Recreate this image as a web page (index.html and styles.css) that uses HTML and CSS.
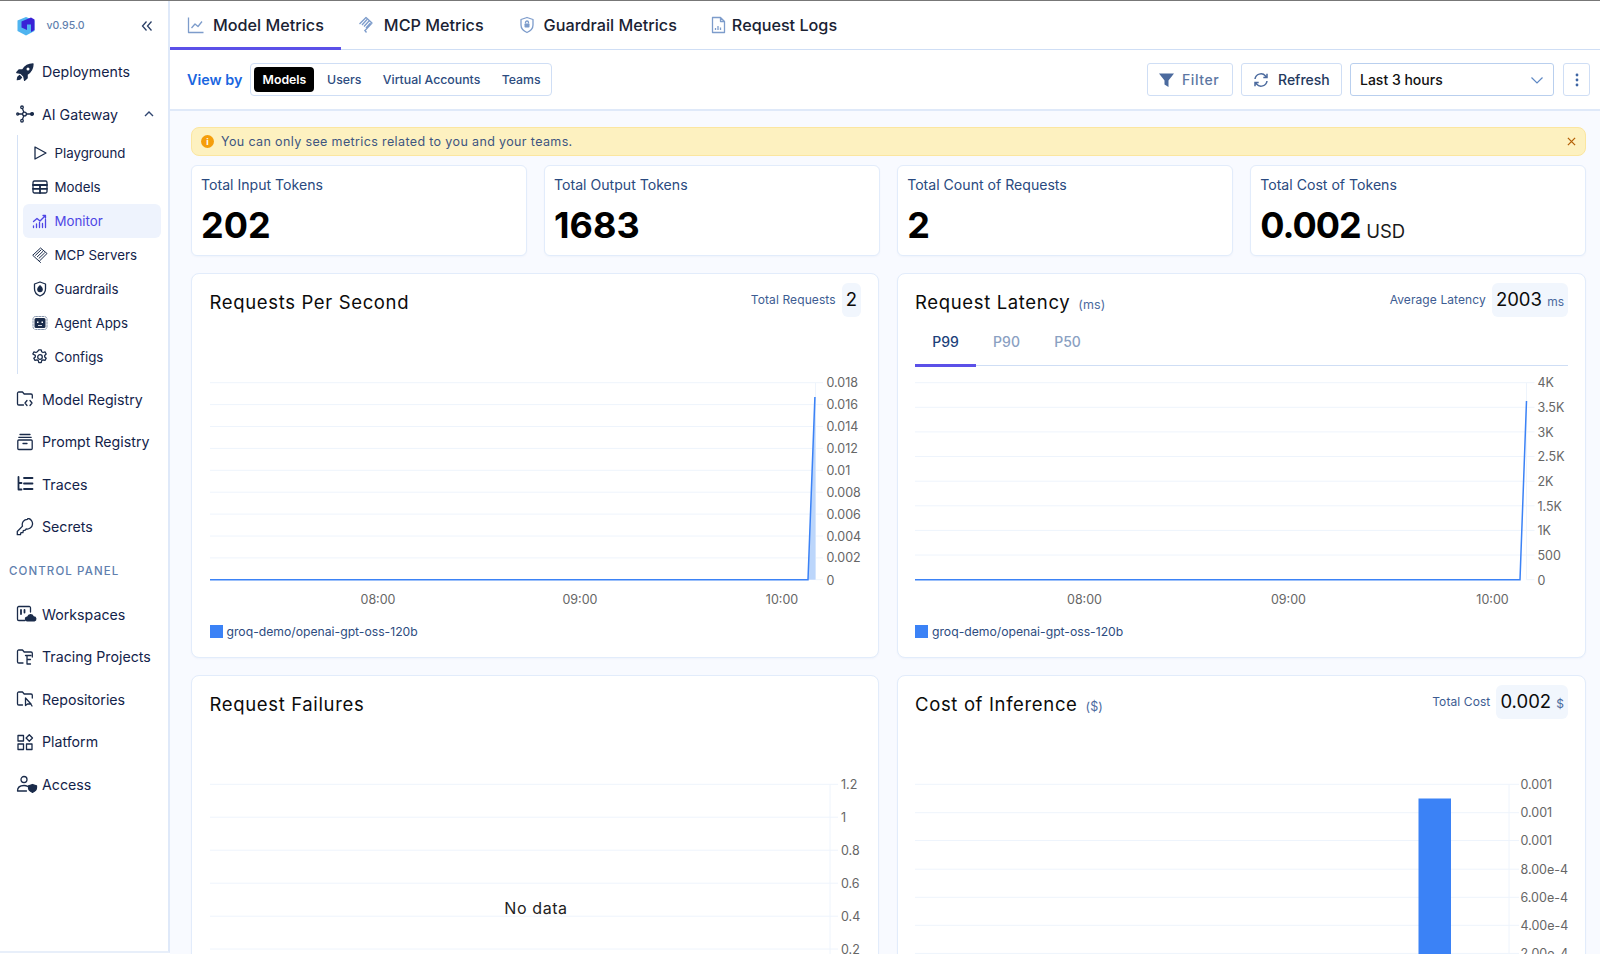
FILE: index.html
```html
<!DOCTYPE html>
<html lang="en">
<head>
<meta charset="utf-8">
<title>AI Gateway Monitor</title>
<link rel="stylesheet" href="styles.css">
</head>
<body>
<div class="app">
<aside class="sidebar">
  <div class="brand">
    <svg class="logo" viewBox="0 0 20 20"><path class="logo-l" d="M10 1 1.500 4.500v10.500l8.500 4.500 8.500-4.500V4.500z"/><path class="logo-d" d="M5.500 5.500 15 1.500l3.500 2v10.500l-3.500 2V8.500H11v5.500l-5.500-2.500z"/></svg>
    <span class="version">v0.95.0</span>
    <svg class="collapse" viewBox="0 0 12 12"><path d="M5.500 1.500 1.500 6l4 4.500M10.500 1.500 6.500 6l4 4.500"/></svg>
  </div>
  <nav class="nav">
    <a class="item"><svg class="ico" viewBox="0 0 18 18"><path class="fill" d="M17 1c-4.500 0-8 2-10.500 6H3L.8 9.500l4 .8 3 3 .8 4 2.500-2.300V11.500C15 9 17 5.500 17 1z"/><circle class="hole" cx="12" cy="6" r="1.500"/><path class="fill" d="M3.500 12.500C2 13.300 1.300 15 1.300 16.700c1.700 0 3.400-.7 4.200-2.200z"/></svg>Deployments</a>
    <a class="item"><svg class="ico" viewBox="0 0 18 18"><circle cx="8.500" cy="9" r="1.900"/><circle cx="6" cy="2.300" r="1.300"/><circle cx="6" cy="15.700" r="1.300"/><circle cx="1.700" cy="9" r="1"/><circle class="fill" cx="16" cy="9" r="1.400"/><path d="M6.500 3.600 7.800 7.200M6.500 14.400 7.800 10.800M2.700 9h3.900M10.400 9h4.200"/></svg>AI Gateway<svg class="chev" viewBox="0 0 12 12"><path d="M2 8l4-4 4 4"/></svg></a>
    <div class="sub">
      <a class="subitem"><svg class="ico" viewBox="0 0 16 16"><path d="M3 2v12L14 8z"/></svg>Playground</a>
      <a class="subitem"><svg class="ico" viewBox="0 0 16 16"><rect x="1" y="2" width="14" height="12" rx="1.500"/><path class="thick" d="M1 6h14M1 9.800h14M8 6v8"/></svg>Models</a>
      <a class="subitem active"><svg class="ico" viewBox="0 0 16 16"><path d="M1.500 14.500v-1.500M4.500 14.500v-3.500M7.500 14.500v-5M10.500 14.500v-4M13.500 14.500v-8M1.500 8.500l3.500-3 3 2.500 5.500-5.500M11 2.500h2.500V5"/></svg>Monitor</a>
      <a class="subitem"><svg class="ico thin" viewBox="0 0 16 16"><path d="M1 8 8.500 1l6.500 5.500-7.500 7.500zM3.500 8.300 9 3M5.300 9.800 10.800 4.500M7 11.300l5.500-5.300M6.500 13.500l2 2"/></svg>MCP Servers</a>
      <a class="subitem"><svg class="ico" viewBox="0 0 16 16"><path d="M8 1 13.500 3v5c0 3.200-2.300 5.700-5.500 7C4.800 13.700 2.500 11.200 2.500 8V3z"/><path class="fill" d="M8 4.800c1 1.200 2.200 2.200 2.200 3.500a2.200 2.200 0 0 1-4.400 0C5.800 7 7 6 8 4.800z"/></svg>Guardrails</a>
      <a class="subitem"><svg class="ico" viewBox="0 0 16 16"><rect class="dash" x="1" y="1.500" width="14" height="13" rx="2.500"/><rect class="fill nostroke" x="2.500" y="3" width="11" height="10" rx="1.500"/><rect class="hole" x="5" y="6.500" width="1.500" height="1.500"/><rect class="hole" x="9.500" y="6.500" width="1.500" height="1.500"/><rect class="hole" x="6" y="10" width="4" height=".8"/></svg>Agent Apps</a>
      <a class="subitem"><svg class="ico" viewBox="0 0 16 16"><circle cx="8" cy="8" r="2.300"/><path d="M6.800.8h2.400l.5 2 1.300.7 2-.6 1.200 2.100-1.500 1.400v1.500l1.500 1.400-1.200 2.100-2-.6-1.300.8-.5 2H6.800l-.5-2-1.300-.8-2 .6-1.200-2.100 1.500-1.400V6.400L.8 5l1.200-2.100 2 .6 1.300-.7z"/></svg>Configs</a>
    </div>
    <a class="item"><svg class="ico" viewBox="0 0 18 18"><path d="M7.500 15H2.800a1.300 1.300 0 0 1-1.300-1.300V3.300A1.300 1.300 0 0 1 2.800 2h3.700l1.700 2H15a1.300 1.300 0 0 1 1.300 1.300V8"/><path d="M11 10.500 9 13l2 2.500M14 10.500l2 2.500-2 2.500"/></svg>Model Registry</a>
    <a class="item"><svg class="ico" viewBox="0 0 18 18"><path d="M4 1.500h10M2.800 4.300h12.400"/><rect x="1.800" y="7" width="14.400" height="9.500" rx="1"/><path d="M7 10.500h4"/></svg>Prompt Registry</a>
    <a class="item"><svg class="ico" viewBox="0 0 18 18"><path class="thick" d="M2.500 2v12.500h3M2.500 8h3M8 3h8.500M8 8.500h8.500M8 14h8.500"/></svg>Traces</a>
    <a class="item"><svg class="ico" viewBox="0 0 18 18"><path d="M11.500 1.300a5.200 5.200 0 0 0-5 6.800L1.300 13.500V16.700h3.200l.4-2h2l.4-2 2-.5.900-1.200a5.200 5.200 0 1 0 1.800-10.700z"/></svg>Secrets</a>
    <div class="section">CONTROL PANEL</div>
    <a class="item"><svg class="ico cloud" viewBox="0 0 21 18"><path d="M9 15.500H2.800a1.300 1.300 0 0 1-1.300-1.300V2.800a1.300 1.300 0 0 1 1.300-1.300h10.400a1.300 1.300 0 0 1 1.300 1.300V7"/><path class="thick" d="M5 5v4M8.500 5v2.500"/><path class="fill nostroke" d="M11.500 16.500a2.500 2.500 0 0 1-.3-5 3.500 3.500 0 0 1 6.600-.3 2.700 2.700 0 0 1 .7 5.300z"/></svg>Workspaces</a>
    <a class="item"><svg class="ico" viewBox="0 0 18 18"><path d="M7 15H2.800a1.300 1.300 0 0 1-1.300-1.300V3.300A1.300 1.300 0 0 1 2.800 2h3.700l1.700 2H15a1.300 1.300 0 0 1 1.300 1.300V9"/><path d="M11 7.500v8.500h3.500M11 11.500h3.500M9.500 7.500h5.500"/></svg>Tracing Projects</a>
    <a class="item"><svg class="ico" viewBox="0 0 18 18"><path d="M6.500 15H2.800a1.300 1.300 0 0 1-1.300-1.300V3.300A1.300 1.300 0 0 1 2.800 2h3.700l1.700 2H15a1.300 1.300 0 0 1 1.300 1.300V8"/><path d="M9.500 8v7.500l2-1.500h3.500zM14.500 13.500l1.500 2.500"/></svg>Repositories</a>
    <a class="item"><svg class="ico" viewBox="0 0 18 18"><rect x="2" y="2.500" width="5.500" height="5.500"/><rect x="2" y="11" width="5.500" height="5.500"/><rect x="10.500" y="11" width="5.500" height="5.500"/><path d="M13.300 1.800 16.500 5l-3.200 3.200L10.100 5z"/></svg>Platform</a>
    <a class="item"><svg class="ico wide" viewBox="0 0 22 18"><circle cx="8" cy="4.500" r="3"/><path d="M1.500 16h9M1.500 16c0-3.500 2.500-5.500 6.500-5.500 1.500 0 2.700.3 3.700.8"/><path class="fill" d="M16.500 9.500l4 1.300v2c0 2-1.500 3.500-4 4.500-2.500-1-4-2.500-4-4.500v-2z"/></svg>Access</a>
  </nav>
</aside>

<main class="main">
  <header class="tabs">
    <a class="tab on"><svg class="tab-ico" viewBox="0 0 18 18"><path d="M1.500 1.500v15h15M4.500 12l3.500-4 3 2.500 4-5"/></svg>Model Metrics</a>
    <a class="tab"><svg class="tab-ico" viewBox="0 0 18 18"><path d="M1.500 8 8 1.500l6 5.500-6.500 7M4 9l5-5.500M6 10.500l5-5.500M8 12l4.500-5M6.500 14l2 2.500"/></svg>MCP Metrics</a>
    <a class="tab"><svg class="tab-ico" viewBox="0 0 18 18"><path d="M9 1.500 15 3.500v5.500c0 3.500-2.500 6-6 7.500-3.500-1.500-6-4-6-7.500V3.500z"/><rect class="tab-fill" x="6.500" y="7.500" width="5" height="4" rx=".8"/><path d="M7.500 7.500V6.500a1.500 1.500 0 0 1 3 0v1"/></svg>Guardrail Metrics</a>
    <a class="tab"><svg class="tab-ico doc" viewBox="0 0 15 18"><path d="M1.500 1.500h8l4 4v11h-12zM9.500 1.500v4h4M4.500 14v-2M7 14v-4M9.500 14v-2.500"/></svg>Request Logs</a>
  </header>

  <div class="toolbar">
    <span class="viewby">View by</span>
    <div class="segment">
      <span class="seg sel">Models</span>
      <span class="seg">Users</span>
      <span class="seg">Virtual Accounts</span>
      <span class="seg">Teams</span>
    </div>
    <div class="spacer"></div>
    <button class="btn filter"><svg class="btn-ico" viewBox="0 0 16 16"><path class="solid-f" d="M.5 1.500h15L10 8.500v6.500l-4-2.500V8.500z"/></svg>Filter</button>
    <button class="btn refresh"><svg class="btn-ico" viewBox="0 0 16 16"><path class="stroke-r" d="M2 7a6 6 0 0 1 10.500-3L14 5.500M14 9a6 6 0 0 1-10.500 3L2 10.500M14 1.800v3.700h-3.700M2 14.200v-3.700h3.700"/></svg>Refresh</button>
    <div class="select">Last 3 hours<svg class="sel-chev" viewBox="0 0 14 14"><path d="M1.500 4.500 7 10l5.500-5.500"/></svg></div>
    <button class="btn more"><svg class="more-ico" viewBox="0 0 4 14"><circle cx="2" cy="2" r="1.400"/><circle cx="2" cy="7" r="1.400"/><circle cx="2" cy="12" r="1.400"/></svg></button>
  </div>

  <div class="content">
    <div class="banner">
      <span class="info">i</span>
      <span class="banner-text">You can only see metrics related to you and your teams.</span>
      <svg class="close" viewBox="0 0 10 10"><path d="M1 1l8 8M9 1l-8 8"/></svg>
    </div>

    <div class="stats">
      <div class="stat"><div class="stat-label">Total Input Tokens</div><div class="stat-value">202</div></div>
      <div class="stat"><div class="stat-label">Total Output Tokens</div><div class="stat-value">1683</div></div>
      <div class="stat"><div class="stat-label">Total Count of Requests</div><div class="stat-value">2</div></div>
      <div class="stat"><div class="stat-label">Total Cost of Tokens</div><div class="stat-value"><span class="tight">0.002</span> <span class="unit">USD</span></div></div>
    </div>

    <div class="charts">
      <section class="card">
        <div class="head">
          <h2 class="title">Requests Per Second</h2>
          <div class="metric"><span class="metric-label">Total Requests</span><span class="metric-box">2</span></div>
        </div>
        <svg class="chart" viewBox="0 370 652 242">
          <g class="grid">
            <line x1="0" x2="613" y1="382.700" y2="382.700"/><line x1="0" x2="613" y1="404.600" y2="404.600"/><line x1="0" x2="613" y1="426.500" y2="426.500"/><line x1="0" x2="613" y1="448.400" y2="448.400"/><line x1="0" x2="613" y1="470.300" y2="470.300"/><line x1="0" x2="613" y1="492.200" y2="492.200"/><line x1="0" x2="613" y1="514.100" y2="514.100"/><line x1="0" x2="613" y1="536" y2="536"/><line x1="0" x2="613" y1="557.900" y2="557.900"/>
            <line x1="605.500" x2="605.500" y1="382.700" y2="579.700"/><line x1="605.500" x2="613" y1="579.700" y2="579.700"/>
          </g>
          <path class="area" d="M598 579.700 604.900 397 605.500 397V579.700z"/>
          <path class="line" d="M0 579.700H598L604.900 397"/>
          <g class="ylab">
            <text x="616.500" y="387.200">0.018</text><text x="616.500" y="409.100">0.016</text><text x="616.500" y="431">0.014</text><text x="616.500" y="452.900">0.012</text><text x="616.500" y="474.800">0.01</text><text x="616.500" y="496.700">0.008</text><text x="616.500" y="518.600">0.006</text><text x="616.500" y="540.500">0.004</text><text x="616.500" y="562.400">0.002</text><text x="616.500" y="584.700">0</text>
          </g>
          <g class="xlab"><text x="168" y="603.500">08:00</text><text x="370" y="603.500">09:00</text><text x="572" y="603.500">10:00</text></g>
        </svg>
        <div class="legend"><i class="swatch"></i>groq-demo/openai-gpt-oss-120b</div>
      </section>

      <section class="card">
        <div class="head">
          <h2 class="title">Request Latency <small class="title-unit">(ms)</small></h2>
          <div class="metric"><span class="metric-label">Average Latency</span><span class="metric-box">2003 <small class="metric-unit">ms</small></span></div>
        </div>
        <div class="ptabs"><span class="ptab on">P99</span><span class="ptab">P90</span><span class="ptab">P50</span></div>
        <svg class="chart" viewBox="0 370 652 242">
          <g class="grid">
            <line x1="0" x2="619.500" y1="382.700" y2="382.700"/><line x1="0" x2="619.500" y1="407.300" y2="407.300"/><line x1="0" x2="619.500" y1="431.900" y2="431.900"/><line x1="0" x2="619.500" y1="456.500" y2="456.500"/><line x1="0" x2="619.500" y1="481.200" y2="481.200"/><line x1="0" x2="619.500" y1="505.800" y2="505.800"/><line x1="0" x2="619.500" y1="530.400" y2="530.400"/><line x1="0" x2="619.500" y1="555" y2="555"/>
            <line x1="611.500" x2="611.500" y1="382.700" y2="579.700"/><line x1="611.500" x2="619.500" y1="579.700" y2="579.700"/>
          </g>
          <path class="line" d="M0 579.700H605L611.500 401"/>
          <g class="ylab">
            <text x="622.500" y="387.200">4K</text><text x="622.500" y="411.800">3.5K</text><text x="622.500" y="436.900">3K</text><text x="622.500" y="461">2.5K</text><text x="622.500" y="485.700">2K</text><text x="622.500" y="510.800">1.5K</text><text x="622.500" y="534.900">1K</text><text x="622.500" y="559.500">500</text><text x="622.500" y="584.700">0</text>
          </g>
          <g class="xlab"><text x="169.500" y="603.500">08:00</text><text x="373.500" y="603.500">09:00</text><text x="577.500" y="603.500">10:00</text></g>
        </svg>
        <div class="legend"><i class="swatch"></i>groq-demo/openai-gpt-oss-120b</div>
      </section>

      <section class="card">
        <div class="head"><h2 class="title">Request Failures</h2></div>
        <svg class="chart lower" viewBox="0 772 652 242">
          <g class="grid">
            <line x1="0" x2="628" y1="784.300" y2="784.300"/><line x1="0" x2="628" y1="817.200" y2="817.200"/><line x1="0" x2="628" y1="850.200" y2="850.200"/><line x1="0" x2="628" y1="883.200" y2="883.200"/><line x1="0" x2="628" y1="916.200" y2="916.200"/><line x1="0" x2="628" y1="949" y2="949"/>
            <line x1="620" x2="620" y1="784.300" y2="1014"/>
          </g>
          <g class="ylab">
            <text x="631" y="788.800">1.2</text><text x="631" y="821.700">1</text><text x="631" y="854.700">0.8</text><text x="631" y="887.700">0.6</text><text x="631" y="920.700">0.4</text><text x="631" y="953.500">0.2</text>
          </g>
          <text class="nodata" x="326" y="914">No data</text>
        </svg>
      </section>

      <section class="card">
        <div class="head">
          <h2 class="title">Cost of Inference <small class="title-unit">($)</small></h2>
          <div class="metric"><span class="metric-label">Total Cost</span><span class="metric-box">0.002 <small class="metric-unit">$</small></span></div>
        </div>
        <svg class="chart lower" viewBox="0 772 652 242">
          <g class="grid">
            <line x1="0" x2="604" y1="784.300" y2="784.300"/><line x1="0" x2="604" y1="812.700" y2="812.700"/><line x1="0" x2="604" y1="840.500" y2="840.500"/><line x1="0" x2="604" y1="869.200" y2="869.200"/><line x1="0" x2="604" y1="897.300" y2="897.300"/><line x1="0" x2="604" y1="925.300" y2="925.300"/><line x1="0" x2="604" y1="953.400" y2="953.400"/>
            <line x1="594" x2="594" y1="784.300" y2="1014"/>
          </g>
          <rect class="bar" x="503.500" y="798.500" width="32.500" height="216"/>
          <g class="ylab">
            <text x="605.500" y="788.800">0.001</text><text x="605.500" y="817.200">0.001</text><text x="605.500" y="845.300">0.001</text><text x="605.500" y="873.700">8.00e-4</text><text x="605.500" y="901.800">6.00e-4</text><text x="605.500" y="929.800">4.00e-4</text><text x="605.500" y="957.900">2.00e-4</text>
          </g>
        </svg>
      </section>
    </div>
  </div>
</main>
</div>
</body>
</html>
```

FILE: styles.css
```css
* { box-sizing: border-box; }
html, body { margin: 0; height: 100%; overflow: hidden; }
body { font-family: Inter, "Liberation Sans", sans-serif; color: #0f1f3d; background: #fff; }
.app { display: flex; height: 954px; border-top: 1px solid #777; overflow: hidden; }

/* Sidebar */
.sidebar { width: 170px; flex: none; border-right: 2px solid #dfe9f9; border-bottom: 2px solid #e8effa; background: #fff; height: 952px; }
.brand { height: 49.250px; display: flex; align-items: center; padding: 0 16px; }
.logo { width: 20px; height: 20px; flex: none; }
.logo-l { fill: #4fb4f0; }
.logo-d { fill: #3a22d6; }
.version { margin-left: 10.500px; font-size: 10.500px; font-weight: 500; color: #5f7fae; }
.collapse { width: 12px; height: 12px; margin-left: auto; margin-right: -1px; fill: none; stroke: #2a3f66; stroke-width: 1.300; }
.item { height: 42.500px; display: flex; align-items: center; padding-left: 16px; font-size: 14.200px; color: #13234a; }
.ico { width: 18px; height: 18px; flex: none; margin-right: 8px; fill: none; stroke: #1a2b4a; stroke-width: 1.300; stroke-linecap: round; stroke-linejoin: round; }
.ico .fill { fill: #1a2b4a; }
.ico .nostroke { stroke: none; }
.ico .hole { fill: #fff; stroke: none; }
.ico .thick { stroke-width: 1.800; }
.ico .dash { stroke: #7b8aa3; stroke-width: .9; stroke-dasharray: 2 1.200; }
.ico.wide { width: 22px; margin-right: 4px; }
.ico.cloud { width: 21px; margin-right: 5px; }
.chev { width: 12px; height: 12px; margin-left: auto; margin-right: 13px; fill: none; stroke: #2f4570; stroke-width: 1.400; }
.sub { margin: 0 0 3.500px 17px; padding: 1px 0 0 5px; border-left: 1px solid #d4e1f5; width: 144px; }
.subitem { height: 34px; display: flex; align-items: center; padding-left: 9px; font-size: 13.300px; color: #13234a; border-radius: 6px; }
.subitem .ico { width: 16px; height: 16px; margin-right: 6.500px; }
.subitem .ico.thin { stroke-width: 1; }
.subitem.active { background: #eef3fd; color: #4f46e5; }
.subitem.active .ico { stroke: #4f46e5; }
.section { height: 45px; display: flex; align-items: center; padding: 2px 0 0 9px; font-size: 11.500px; font-weight: 500; letter-spacing: 1.100px; color: #5f7fae; }

/* Main */
.main { flex: 1; min-width: 0; display: flex; flex-direction: column; }
.tabs { height: 48px; flex: none; display: flex; border-bottom: 1px solid #cfdef5; box-sizing: content-box; }
.tab { display: flex; align-items: center; padding: 0 17px; height: 48px; font-size: 16.200px; font-weight: 500; color: #1a2233; }
.tab.on { box-shadow: inset 0 -2px 0 #5b50e8, 0 1px 0 #5b50e8; }
.tab-ico { width: 18px; height: 18px; margin-right: 8px; flex: none; fill: none; stroke: #7d9ccb; stroke-width: 1.300; stroke-linejoin: round; }
.tab-ico.doc { width: 15px; margin-right: 6px; }
.tab-fill { fill: #7d9ccb; stroke: none; }
.toolbar { height: 61px; flex: none; display: flex; align-items: center; padding: 0 10px 0 17px; border-bottom: 2px solid #dfe9f9; background: #fff; }
.viewby { font-size: 14.400px; font-weight: 600; color: #1a66e0; margin-right: 8px; }
.segment { height: 33px; display: flex; align-items: center; border: 1px solid #cfdef5; border-radius: 4px; padding: 0 3px; width: 302px; flex: none; }
.seg { flex: none; height: 25px; display: flex; align-items: center; font-size: 12.300px; font-weight: 500; color: #2d4c80; padding: 0 10.700px; white-space: nowrap; }
.seg.sel { background: #000; color: #fff; border-radius: 4px; font-weight: 600; width: 60px; justify-content: center; padding: 0; margin-right: 2px; }
.spacer { flex: 1; }
.btn { height: 33px; display: flex; align-items: center; background: #fff; border: 1px solid #cfdef5; border-radius: 3px; font: inherit; font-size: 14px; padding: 0; margin-right: 8px; }
.filter { width: 86px; padding-left: 10px; color: #5c77a3; font-weight: 500; letter-spacing: .6px; }
.filter .btn-ico { width: 17px; margin-right: 7px; }
.refresh { width: 101px; padding-left: 11px; color: #24395e; font-weight: 500; }
.btn-ico { width: 16px; height: 16px; margin-right: 9px; flex: none; }
.solid-f { fill: #4b6a9e; }
.stroke-r { fill: none; stroke: #4b6a9e; stroke-width: 1.500; }
.select { width: 204px; height: 33px; display: flex; align-items: center; justify-content: space-between; padding: 0 9px; border: 1px solid #b9cfee; border-radius: 3px; font-size: 14px; color: #111; font-weight: 500; margin-right: 9px; }
.sel-chev { width: 14px; height: 14px; fill: none; stroke: #5e88c4; stroke-width: 1.200; }
.more { width: 27px; margin-right: 0; justify-content: center; }
.more-ico { width: 4px; height: 14px; fill: #3f66a4; }

.content { flex: 1; min-height: 0; overflow: hidden; background: #f8faff; padding: 16px 14px 0 21px; }
.banner { height: 29px; display: flex; align-items: center; background: #fdf1c0; border: 1px solid #fbe6a0; border-radius: 8px; padding: 0 9px; }
.info { width: 13px; height: 13px; flex: none; border-radius: 50%; background: #f59e0b; color: #fff; font-size: 9px; font-weight: 700; display: flex; align-items: center; justify-content: center; margin-right: 7px; }
.banner-text { font-size: 12.500px; letter-spacing: .37px; color: #3e5680; flex: 1; }
.close { width: 9px; height: 9px; fill: none; stroke: #b45f06; stroke-width: 1.400; }

.stats { display: grid; grid-template-columns: repeat(4, 1fr); gap: 17.300px; margin-top: 9px; }
.stat { height: 91px; background: #fff; border: 1px solid #e2ecfb; border-radius: 6px; padding: 10px 9px 0; box-shadow: 0 1px 2px rgba(30,70,150,.04); }
.stat-label { font-size: 14.100px; line-height: 18px; color: #2a4a80; }
.stat-value { font-size: 36px; font-weight: 700; line-height: 44px; margin-top: 9px; color: #000; }
.tight { letter-spacing: -1px; }
.unit { font-size: 18.500px; font-weight: 400; color: #1a1a1a; margin-left: -3px; }

.charts { display: grid; grid-template-columns: 688px 689px; gap: 17px 18px; margin-top: 17px; }
.card { height: 385px; display: flex; flex-direction: column; background: #fff; border: 1px solid #e2ecfb; border-radius: 8px; padding: 9px 17px 18px 17.500px; box-shadow: 0 1px 2px rgba(30,70,150,.04); }
.card:nth-child(even) { padding-left: 17px; }
.head { height: 34px; flex: none; display: flex; justify-content: space-between; align-items: flex-start; }
.title { margin: 0; font-size: 18.500px; line-height: 38px; font-weight: 400; letter-spacing: .65px; color: #0b0b0b; white-space: nowrap; }
.title-unit { font-size: 12.500px; font-weight: 400; letter-spacing: .2px; color: #4b6a9e; margin-left: 2px; }
.metric { display: flex; align-items: flex-start; }
.metric-label { font-size: 12px; line-height: 34px; letter-spacing: .1px; color: #3d5c92; padding-right: 6px; }
.metric-box { height: 34px; min-width: 19px; padding: 0 4px; background: #f1f6fd; border-radius: 6px; font-size: 18.500px; line-height: 32px; color: #0b0b0b; white-space: nowrap; text-align: center; }
.metric-unit { font-size: 12px; color: #4b6a9e; }
.ptabs { display: flex; height: 41px; margin-top: 8px; border-bottom: 1px solid #cfdef5; flex: none; }
.ptab { width: 61px; text-align: center; font-size: 14px; line-height: 34px; font-weight: 500; color: #8aa0c2; height: 41px; }
.ptab.on { color: #1c3f7a; box-shadow: inset 0 -2px 0 #5b50e8, 0 1px 0 #5b50e8; }
.chart { width: 652px; height: 242px; flex: none; margin-top: auto; margin-bottom: 11px; display: block; overflow: visible; }
.chart.lower { margin-bottom: 27px; }
.grid line { stroke: #eef4fc; stroke-width: 1; }
.line { fill: none; stroke: #3b82f6; stroke-width: 1.500; }
.area { fill: #bcd6fb; }
.bar { fill: #3b82f6; }
.ylab text, .xlab text { font-family: Inter, sans-serif; font-size: 12.500px; fill: #666; }
.xlab text { text-anchor: middle; }
.nodata { font-family: Inter, sans-serif; font-size: 16px; letter-spacing: .6px; fill: #222; text-anchor: middle; }
.legend { height: 16px; flex: none; display: flex; align-items: center; font-size: 12.200px; color: #2d4c80; }
.swatch { width: 13px; height: 13px; background: #3b82f6; margin-right: 4px; flex: none; }
```
